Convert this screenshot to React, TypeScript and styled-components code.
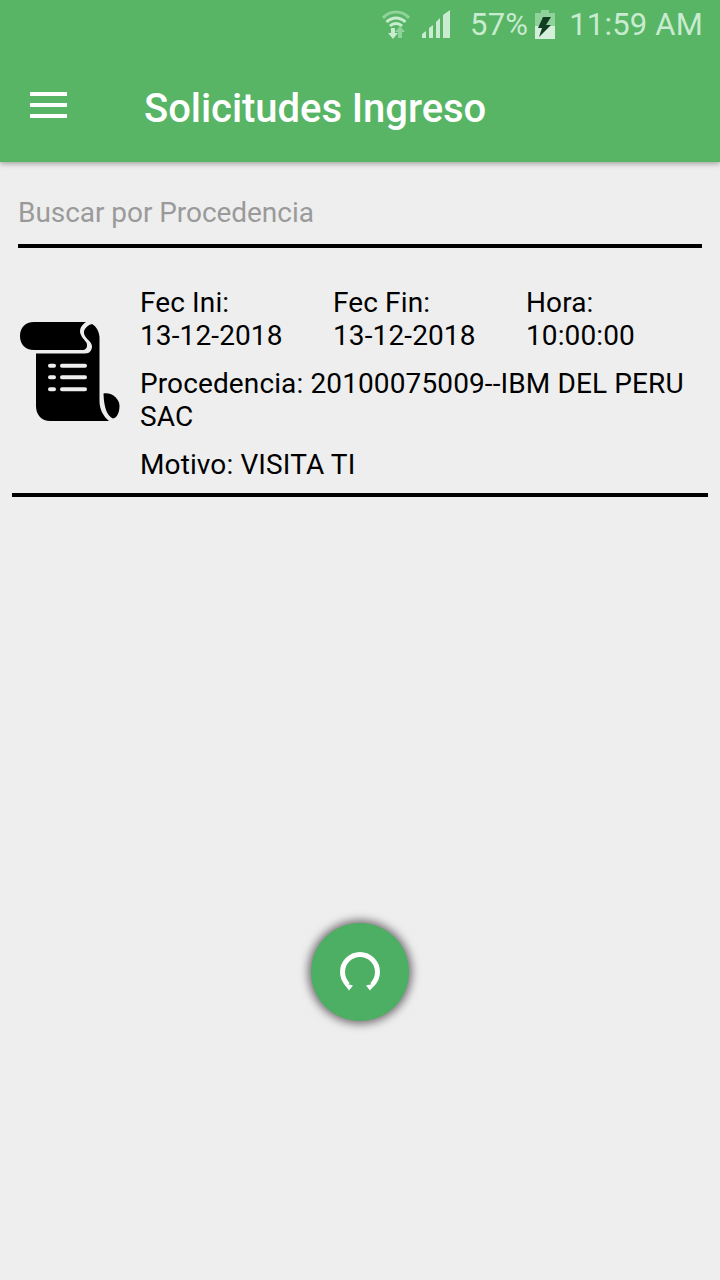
import React from "react";
import styled, { createGlobalStyle } from "styled-components";

const Global = createGlobalStyle`
  html, body { margin: 0; padding: 0; background: #eeeeee; }
  body { font-family: Roboto, "Liberation Sans", sans-serif; }
`;

const Page = styled.div`
  width: 720px;
  height: 1280px;
  position: relative;
  overflow: hidden;
  background: #eeeeee;
  display: flex;
  flex-direction: column;
`;

const Header = styled.header`
  height: 162px;
  flex: none;
  background: #57b565;
  box-shadow: 0 2px 5px rgba(0, 0, 0, 0.3);
  display: flex;
  flex-direction: column;
`;

const StatusBar = styled.div`
  height: 48px;
  display: flex;
  align-items: center;
  justify-content: flex-end;
  padding-right: 17px;
  color: #c9ebcf;
  font-size: 31px;
  letter-spacing: 0.2px;
`;

const StatusIcon = styled.svg<{ $mr: number }>`
  display: block;
  flex: none;
  margin-right: ${(p) => p.$mr}px;
`;

const Percent = styled.span`
  margin-right: 7px;
`;

const Toolbar = styled.div`
  height: 114px;
  display: flex;
  align-items: center;
  padding: 8px 0 0 30px;
  box-sizing: border-box;
`;

const Menu = styled.div`
  width: 37px;
  height: 26px;
  margin: 0 77px 8px 0;
  display: flex;
  flex-direction: column;
  justify-content: space-between;
`;

const MenuBar = styled.span`
  display: block;
  height: 4px;
  background: #ffffff;
`;

const Title = styled.h1`
  margin: 0;
  color: #ffffff;
  font-size: 40px;
  font-weight: 500;
  line-height: 48px;
  letter-spacing: -0.05px;
`;

const Search = styled.div`
  margin: 26px 18px 0;
  height: 56px;
  border-bottom: 4px solid #000000;
  color: #9a9a9a;
  font-size: 28px;
  line-height: 50px;
  letter-spacing: -0.05px;
`;

const Row = styled.div`
  margin: 39px 12px 0;
  border-bottom: 4px solid #000000;
  display: flex;
  align-items: flex-start;
  padding-bottom: 11px;
`;

const RowIcon = styled.svg`
  display: block;
  flex: none;
  margin: 34px 20px 0 8px;
`;

const Details = styled.div`
  flex: 1;
  color: #000000;
  font-size: 28px;
  line-height: 32.6px;
  letter-spacing: 0.12px;
`;

const Dates = styled.div`
  display: grid;
  grid-template-columns: 193px 193px 1fr;
`;

const Line = styled.div`
  margin-top: 16px;
  padding-right: 10px;
`;

const Fab = styled.button`
  position: absolute;
  left: 311px;
  top: 923px;
  width: 98px;
  height: 98px;
  border: none;
  padding: 0;
  border-radius: 50%;
  background: #4caf63;
  box-shadow: 0 0 8px 3px rgba(40, 30, 40, 0.6);
  display: flex;
  align-items: center;
  justify-content: center;
`;

export default function App() {
  return (
    <Page>
      <Global />
      <Header>
        <StatusBar>
          <StatusIcon $mr={12} width="28" height="29" viewBox="0 0 28 29" fill="none">
            <path d="M1 8 C8 0 20 0 27 8" stroke="#8fd39b" strokeWidth="3" />
            <path d="M4.500 12 C10 6.500 18 6.500 23.500 12" stroke="#c9ebcf" strokeWidth="3" />
            <path d="M8 16 C11.500 12.500 16.500 12.500 20 16" stroke="#c9ebcf" strokeWidth="3" />
            <path d="M9 18h4v5h3l-5 6-5-6h3z" fill="#c9ebcf" />
            <path d="M18 16l5 6h-3v6h-4v-6h-3z" fill="#8fd39b" />
          </StatusIcon>
          <StatusIcon $mr={20} width="28" height="28" viewBox="0 0 28 28">
            <path d="M0 28v-4l4-3v7zM7 28V18l4-3v13zM14 28V12l4-4v20zM21 28V5l7-5v28z" fill="#c9ebcf" />
          </StatusIcon>
          <Percent>57%</Percent>
          <StatusIcon $mr={14} width="20" height="29" viewBox="0 0 20 29">
            <path d="M6 0h8v3h6v14H0V3h6z" fill="#8fd39b" />
            <path d="M0 16h20v13H0z" fill="#d6efda" />
            <path d="M8 7h8l-5 8h5L4 27l3-9H3z" fill="#123d22" />
          </StatusIcon>
          <span>11:59 AM</span>
        </StatusBar>
        <Toolbar>
          <Menu>
            <MenuBar />
            <MenuBar />
            <MenuBar />
          </Menu>
          <Title>Solicitudes Ingreso</Title>
        </Toolbar>
      </Header>
      <Search>Buscar por Procedencia</Search>
      <Row>
        <RowIcon width="100" height="100" viewBox="0 0 100 100">
          <path d="M14 1H66C60 5 59 10 61 14C63 19 68 21 67 25C67 27 65 29 63 29H14C5 29 0 23 0 15C0 7 5 1 14 1Z" fill="#000" />
          <path d="M16 32.500H65C70 32.500 72 29 72 25C71 19 63 17 64 10C65 7 68 4 72 3C76 5 79 10 79.500 16V80C79.500 88 83 95 89 100H30C22 100 16 94 16 85Z" fill="#000" />
          <path d="M83.500 72.500C92 71 99.500 78 99.500 85C99.500 91 97 97 93 97.500C87 95 84 87 83.500 72.500Z" fill="#000" />
          <path d="M30 44.700h4M42 44.700h23M30 56.300h4M42 56.300h23M30 68.300h4M42 68.300h23" stroke="#eee" strokeWidth="4" strokeLinecap="round" />
        </RowIcon>
        <Details>
          <Dates>
            <div>Fec Ini:<br />13-12-2018</div>
            <div>Fec Fin:<br />13-12-2018</div>
            <div>Hora:<br />10:00:00</div>
          </Dates>
          <Line>Procedencia: 20100075009--IBM DEL PERU SAC</Line>
          <Line>Motivo: VISITA TI</Line>
        </Details>
      </Row>
      <Fab aria-label="Actualizar">
        <svg width="44" height="44" viewBox="0 0 44 44" fill="none">
          <path d="M10 34.700A17.500 17.500 0 1 1 34 34.700" stroke="#fff" strokeWidth="5" />
          <path d="M5.500 33l9.500 2.500-4 5zM38.500 33l-10.500 2.500 4 5z" fill="#fff" />
        </svg>
      </Fab>
    </Page>
  );
}
